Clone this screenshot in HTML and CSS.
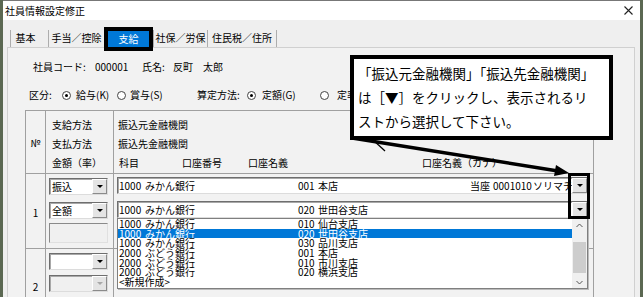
FILE: index.html
```html
<!DOCTYPE html>
<html lang="ja">
<head>
    <meta charset="UTF-8">
    <title>社員情報設定修正</title>
    <link rel="stylesheet" href="styles.css">
</head>
<body>
    <div class="window">
        <div class="titlebar">
            <span class="title">社員情報設定修正</span>
            <svg class="close" width="9" height="9" viewBox="0 0 9 9"><path d="M0.5 0.5L8.5 8.5M8.5 0.5L0.5 8.5" stroke="#222" stroke-width="1.1"/></svg>
        </div>
        <div class="client">
            <div class="tabs">
                <div class="tab w38">基本</div>
                <div class="tab w56">手当／控除</div>
                <div class="tab tab-active">支給</div>
                <div class="tab w54">社保／労保</div>
                <div class="tab w70 tab-last">住民税／住所</div>
            </div>
            <div class="panel">
                <div class="emp-row">
                    <span class="lbl-code">社員コード:</span>
                    <span class="val-code">000001</span>
                    <span class="lbl-name">氏名:</span>
                    <span>反町　太郎</span>
                </div>
                <div class="radio-row">
                    <span class="w33">区分:</span>
                    <span class="radio radio-on mr5"></span><span class="w41">給与(K)</span>
                    <span class="radio mr4"></span><span class="w67">賞与(S)</span>
                    <span class="w50">算定方法:</span>
                    <span class="radio radio-on mr6"></span><span class="w58">定額(G)</span>
                    <span class="radio mr8"></span><span>定率(R)</span>
                </div>
                <div class="grid">
                    <div class="cell head head-no">№</div>
                    <div class="cell head head-pay">
                        <div>支給方法</div>
                        <div>支払方法</div>
                        <div>金額（率）</div>
                    </div>
                    <div class="cell head head-bank">
                        <div>振込元金融機関</div>
                        <div>振込先金融機関</div>
                        <div class="head-cols"><span class="hc1">科目</span><span class="hc2">口座番号</span><span class="hc3">口座名義</span><span>口座名義（カナ）</span></div>
                    </div>

                    <div class="cell row1 num">1</div>
                    <div class="cell row1 pay">
                        <div class="combo small"><span class="combo-text">振込</span><span class="combo-btn"></span></div>
                        <div class="combo small gap7"><span class="combo-text">全額</span><span class="combo-btn"></span></div>
                        <div class="textbox-off"></div>
                    </div>
                    <div class="cell row1 bank">
                        <div class="combo wide">
                            <span class="combo-text"><span class="c-code">1000</span><span class="c-bank">みかん銀行</span><span class="c-br">001</span><span class="c-brname">本店</span><span class="c-kind">当座</span><span class="c-acct">0001010</span><span>ソリマチ</span></span>
                            <span class="combo-btn"></span>
                        </div>
                        <div class="combo wide gap7">
                            <span class="combo-text"><span class="c-code">1000</span><span class="c-bank">みかん銀行</span><span class="c-br">020</span><span>世田谷支店</span></span>
                            <span class="combo-btn"></span>
                        </div>
                        <div class="droplist">
                            <div class="droplist-items">
                                <div class="item"><span class="c-code">1000</span><span class="c-bank">みかん銀行</span><span class="c-br">010</span><span>仙台支店</span></div>
                                <div class="item item-sel"><span class="c-code">1000</span><span class="c-bank">みかん銀行</span><span class="c-br">020</span><span>世田谷支店</span></div>
                                <div class="item"><span class="c-code">1000</span><span class="c-bank">みかん銀行</span><span class="c-br">030</span><span>品川支店</span></div>
                                <div class="item"><span class="c-code">2000</span><span class="c-bank">ぶどう銀行</span><span class="c-br">001</span><span>本店</span></div>
                                <div class="item"><span class="c-code">2000</span><span class="c-bank">ぶどう銀行</span><span class="c-br">010</span><span>市川支店</span></div>
                                <div class="item"><span class="c-code">2000</span><span class="c-bank">ぶどう銀行</span><span class="c-br">020</span><span>横浜支店</span></div>
                                <div class="item">&lt;新規作成&gt;</div>
                            </div>
                            <div class="scroll">
                                <div class="scroll-arrow"><svg width="7" height="5" viewBox="0 0 7 5"><path d="M0.5 4L3.5 1L6.5 4" fill="none" stroke="#555" stroke-width="1"/></svg></div>
                                <div class="scroll-thumb"></div>
                                <div class="scroll-arrow down"><svg width="7" height="5" viewBox="0 0 7 5"><path d="M0.5 1L3.5 4L6.5 1" fill="none" stroke="#555" stroke-width="1"/></svg></div>
                            </div>
                        </div>
                    </div>

                    <div class="cell row2 num num2">2</div>
                    <div class="cell row2 pay">
                        <div class="combo small"><span class="combo-text"></span><span class="combo-btn"></span></div>
                        <div class="combo small combo-off gap5"><span class="combo-text"></span><span class="combo-btn"></span></div>
                    </div>
                    <div class="cell row2 bank"></div>
                </div>
            </div>
        </div>

        <div class="callout">「振込元金融機関」「振込先金融機関」<br>は［▼］をクリックし、表示されるリ<br>ストから選択して下さい。</div>
        <svg class="pointer" width="637" height="297" viewBox="3 0 637 297">
            <line x1="352" y1="138" x2="558" y2="171" stroke="#000" stroke-width="3.5"/>
            <line x1="372" y1="139" x2="385" y2="151" stroke="#000" stroke-width="1.3"/>
            <polygon points="569,173 554,176 556,165" fill="#000"/>
        </svg>
        <div class="mark"></div>
    </div>
</body>
</html>
```

FILE: styles.css
```css
* {
    box-sizing: border-box;
}
body {
    margin: 0;
    background: #5b6852;
    font-family: "Noto Sans CJK JP", "Liberation Sans", sans-serif;
    font-size: 10px;
    color: #000;
}
.window {
    position: relative;
    margin-left: 3px;
    width: 637px;
    height: 297px;
    overflow: hidden;
    background: #efefef;
}
.titlebar {
    height: 20px;
    background: #fff;
    display: flex;
    align-items: center;
    padding-left: 2px;
    border-top: 1px solid #777;
}
.title {
    line-height: 14px;
}
.close {
    margin-left: auto;
    margin-right: 7px;
}
.client {
    padding-top: 10px;
}
.tabs {
    display: flex;
    height: 17px;
    padding-left: 7px;
}
.tab {
    height: 17px;
    line-height: 16px;
    border-left: 1px solid #adadad;
    text-align: center;
}
.tab-last {
    border-right: 1px solid #adadad;
}
.w38 { width: 38px; padding-right: 8px; }
.w56 { width: 56px; }
.w54 { width: 54px; }
.w70 { width: 70px; }
.tab-active {
    position: relative;
    z-index: 1;
    width: 49px;
    height: 24px;
    margin-top: -3px;
    border: 4px solid #000;
    background: #0078d7;
    color: #fff;
    line-height: 16px;
}
.panel {
    margin-left: 4px;
    width: 628px;
    height: 250px;
    padding-top: 12px;
    background: #f2f2f2;
    border: 1px solid #d0d0d0;
    border-bottom: none;
}
.emp-row {
    display: flex;
    height: 14px;
    line-height: 14px;
    padding-left: 25px;
}
.lbl-code { width: 62px; }
.val-code { width: 47px; }
.lbl-name { width: 31px; }
.radio-row {
    display: flex;
    align-items: center;
    height: 14px;
    line-height: 14px;
    margin-top: 14px;
    padding-left: 21px;
}
.w33 { width: 33px; }
.w41 { width: 41px; }
.w67 { width: 67px; }
.w50 { width: 50px; }
.w58 { width: 58px; }
.mr4 { margin-right: 4px; }
.mr5 { margin-right: 5px; }
.mr6 { margin-right: 6px; }
.mr8 { margin-right: 8px; }
.radio {
    width: 9px;
    height: 9px;
    border: 1px solid #444;
    border-radius: 50%;
    background: #fff;
    display: inline-flex;
    align-items: center;
    justify-content: center;
    flex-shrink: 0;
}
.radio-on::after {
    content: "";
    width: 3px;
    height: 3px;
    border-radius: 50%;
    background: #000;
}
.grid {
    display: grid;
    grid-template-columns: 20px 68px 480px;
    width: 569px;
    margin-top: 8px;
    margin-left: 17px;
    border-top: 1px solid #a0a0a0;
    border-right: 1px solid #a0a0a0;
}
.cell {
    border-left: 1px solid #a0a0a0;
    border-bottom: 1px solid #a0a0a0;
}
.head {
    height: 63px;
    padding-top: 4px;
    line-height: 19px;
    white-space: nowrap;
}
.head-no {
    display: flex;
    align-items: center;
    justify-content: center;
    padding-top: 0;
}
.head-pay {
    padding-left: 6px;
}
.head-bank {
    padding-left: 4px;
}
.head-cols {
    display: flex;
    padding-left: 1px;
}
.hc1 { width: 63px; }
.hc2 { width: 66px; }
.hc3 { width: 174px; }
.row1 {
    height: 75px;
}
.row2 {
    height: 60px;
    border-bottom: none;
}
.num {
    text-align: center;
    padding-top: 32px;
    line-height: 14px;
}
.num2 {
    padding-top: 31px;
}
.pay {
    padding: 4px 0 0 3px;
}
.bank {
    position: relative;
    padding: 3px 0 0 3px;
}
.combo {
    display: flex;
    height: 17px;
    background: #fff;
    border: 1px solid;
    border-color: #6e6e6e #dcdcdc #dcdcdc #6e6e6e;
    box-shadow: inset 1px 1px 0 #a8a8a8;
}
.small { width: 59px; }
.wide { width: 471px; }
.gap7 { margin-top: 7px; }
.gap5 { margin-top: 5px; }
.combo-text {
    flex: 1;
    display: flex;
    padding-left: 1px;
    line-height: 15px;
    white-space: nowrap;
    overflow: hidden;
}
.small .combo-text {
    padding-left: 2px;
}
.combo-btn {
    width: 15px;
    flex-shrink: 0;
    background: #e4e4e4;
    border: 1px solid;
    border-color: #fff #8a8a8a #8a8a8a #fff;
    display: flex;
    align-items: center;
    justify-content: center;
}
.combo-btn::before {
    content: "";
    border-left: 3px solid transparent;
    border-right: 3px solid transparent;
    border-top: 3px solid #000;
}
.combo-off {
    background: #f0f0f0;
}
.combo-off .combo-btn::before {
    border-top-color: #a8a8a8;
}
.textbox-off {
    width: 59px;
    height: 20px;
    margin-top: 4px;
    background: #f0f0f0;
    border: 1px solid;
    border-color: #8a8a8a #e0e0e0 #e0e0e0 #8a8a8a;
}
.c-code { width: 26px; flex-shrink: 0; }
.c-bank { width: 153px; flex-shrink: 0; }
.c-br { width: 20px; flex-shrink: 0; }
.c-brname { width: 152px; flex-shrink: 0; }
.c-kind { width: 23px; flex-shrink: 0; }
.c-acct { width: 40px; flex-shrink: 0; }
.droplist {
    position: absolute;
    top: 44px;
    left: 3px;
    width: 471px;
    height: 71px;
    display: flex;
    background: #fff;
    border: 1px solid #7f7f7f;
    box-shadow: 1px 1px 0 #bbb;
}
.droplist-items {
    flex: 1;
    overflow: hidden;
}
.item {
    display: flex;
    height: 9.7px;
    line-height: 9.7px;
    padding-left: 1px;
    white-space: nowrap;
}
.item-sel {
    background: #0078d7;
    color: #fff;
}
.scroll {
    width: 15px;
    background: #f0f0f0;
    display: flex;
    flex-direction: column;
}
.scroll-arrow {
    height: 12px;
    display: flex;
    align-items: center;
    justify-content: center;
}
.scroll-arrow.down {
    margin-top: 3px;
}
.scroll-thumb {
    height: 31px;
    margin: 11px 1px 0;
    background: #cdcdcd;
}
.callout {
    position: absolute;
    z-index: 3;
    left: 347px;
    top: 55px;
    width: 263px;
    height: 85px;
    padding: 2px 0 0 4px;
    background: #fff;
    border: 4px solid #000;
    font-size: 13.5px;
    line-height: 24px;
    white-space: nowrap;
    color: #000;
}
.pointer {
    position: absolute;
    z-index: 3;
    left: 0;
    top: 0;
}
.mark {
    position: absolute;
    z-index: 3;
    left: 565px;
    top: 173px;
    width: 22px;
    height: 46px;
    border: 3px solid #000;
}
```
